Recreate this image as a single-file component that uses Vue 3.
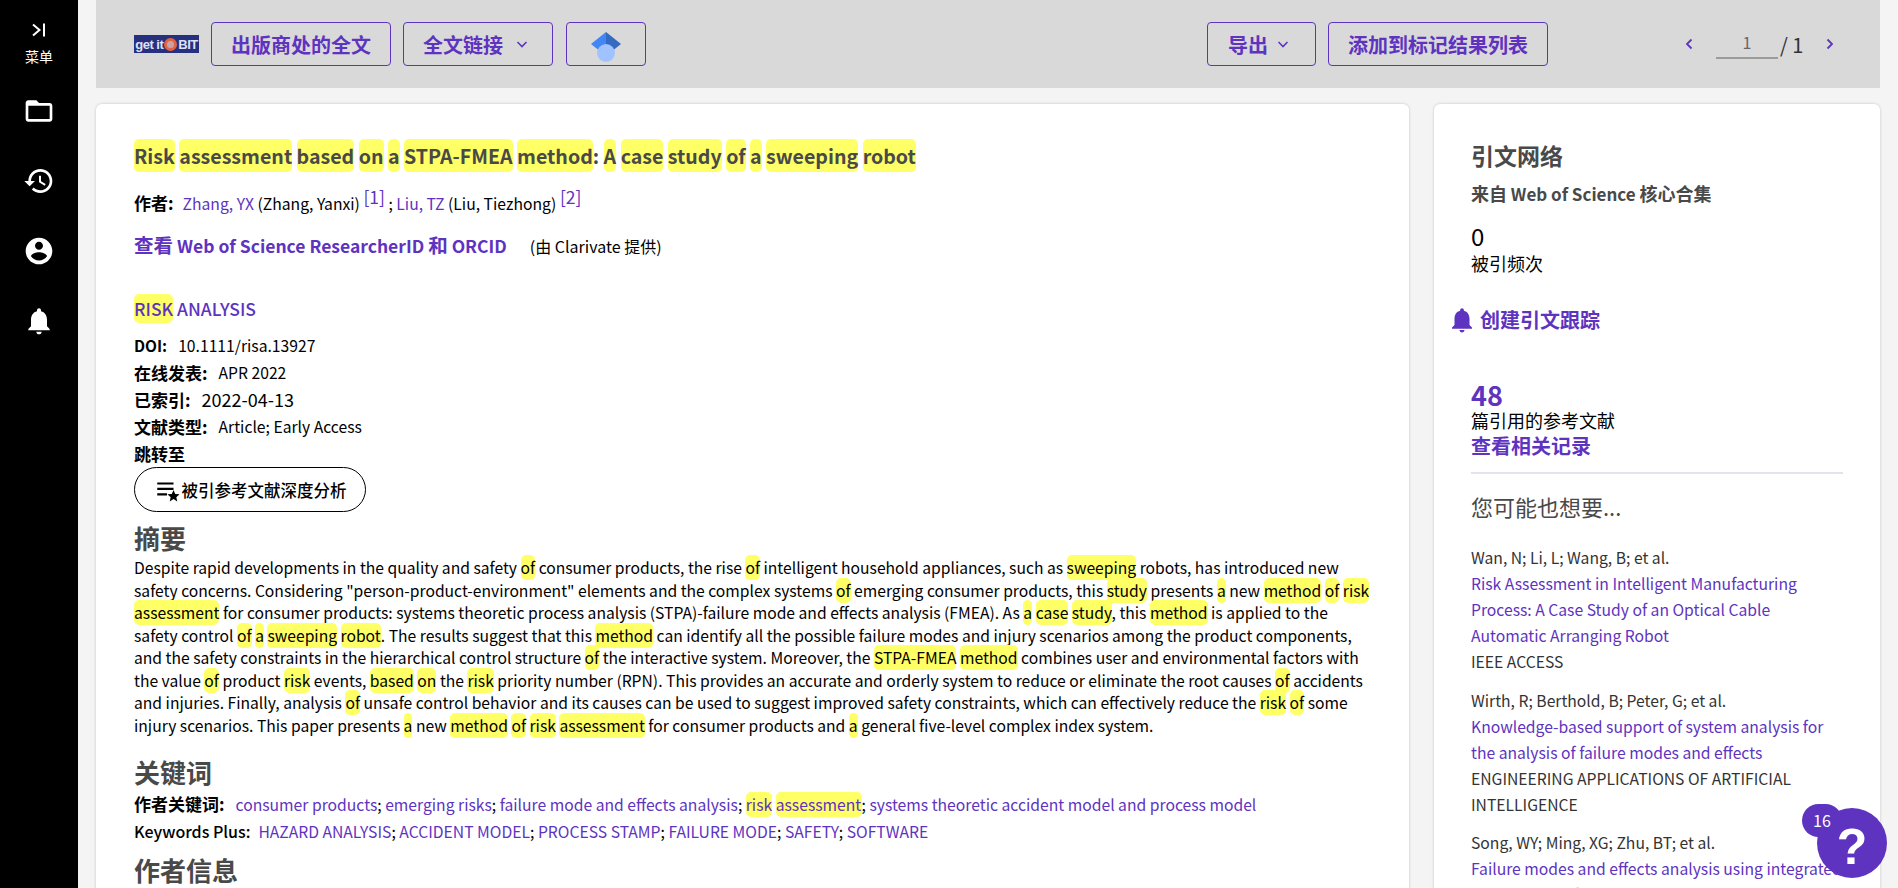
<script setup>
const navIcons = [
  'M20 6h-8l-2-2H4c-1.1 0-1.99.9-1.99 2L2 18c0 1.1.9 2 2 2h16c1.1 0 2-.9 2-2V8c0-1.1-.9-2-2-2zm0 12H4V8h16v10z',
  'M13 3c-4.97 0-9 4.03-9 9H1l3.89 3.89.07.14L9 12H6c0-3.87 3.13-7 7-7s7 3.13 7 7-3.13 7-7 7c-1.93 0-3.68-.79-4.94-2.06l-1.42 1.42C8.27 19.99 10.51 21 13 21c4.97 0 9-4.03 9-9s-4.03-9-9-9zm-1 5v5l4.28 2.54.72-1.21-3.5-2.08V8H12z',
  'M12 2C6.48 2 2 6.48 2 12s4.48 10 10 10 10-4.48 10-10S17.52 2 12 2zm0 3c1.66 0 3 1.34 3 3s-1.34 3-3 3-3-1.34-3-3 1.34-3 3-3zm0 14.2c-2.5 0-4.71-1.28-6-3.22.03-1.99 4-3.08 6-3.08 1.99 0 5.97 1.09 6 3.08-1.29 1.94-3.5 3.22-6 3.22z',
  'M12 22c1.1 0 2-.9 2-2h-4c0 1.1.89 2 2 2zm6-6v-5c0-3.07-1.64-5.64-4.5-6.32V4c0-.83-.67-1.5-1.5-1.5s-1.5.67-1.5 1.5v.68C7.63 5.36 6 7.92 6 11v5l-2 2v1h16v-1l-2-2z'
]
const bell = navIcons[3]

// * marks a highlighted word
const abstract = 'Despite rapid developments in the quality and safety *of consumer products, the rise *of intelligent household appliances, such as *sweeping robots, has introduced new safety concerns. Considering "person-product-environment" elements and the complex systems *of emerging consumer products, this *study presents *a new *method *of *risk *assessment for consumer products: systems theoretic process analysis (STPA)-failure mode and effects analysis (FMEA). As *a *case *study, this *method is applied to the safety control *of *a *sweeping *robot. The results suggest that this *method can identify all the possible failure modes and injury scenarios among the product components, and the safety constraints in the hierarchical control structure *of the interactive system. Moreover, the *STPA-FMEA *method combines user and environmental factors with the value *of product *risk events, *based *on the *risk priority number (RPN). This provides an accurate and orderly system to reduce or eliminate the root causes *of accidents and injuries. Finally, analysis *of unsafe control behavior and its causes can be used to suggest improved safety constraints, which can effectively reduce the *risk *of some injury scenarios. This paper presents *a new *method *of *risk *assessment for consumer products and *a general five-level complex index system.'

function splitMarks(text) {
  return text.split(' ').map(w => {
    if (!w.startsWith('*')) return { text: w, hit: false, tail: '' }
    const m = w.slice(1).match(/^([\w-]+)(.*)$/)
    return { text: m[1], hit: true, tail: m[2] }
  })
}
const abstractWords = splitMarks(abstract)
const titleWords = splitMarks('*Risk *assessment *based *on *a *STPA-FMEA *method: *A *case *study *of *a *sweeping *robot')

const plusKeywords = ['HAZARD ANALYSIS', 'ACCIDENT MODEL', 'PROCESS STAMP', 'FAILURE MODE', 'SAFETY', 'SOFTWARE']

const related = [
  {
    authors: 'Wan, N; Li, L; Wang, B; et al.',
    title: 'Risk Assessment in Intelligent Manufacturing Process: A Case Study of an Optical Cable Automatic Arranging Robot',
    source: 'IEEE ACCESS'
  },
  {
    authors: 'Wirth, R; Berthold, B; Peter, G; et al.',
    title: 'Knowledge-based support of system analysis for the analysis of failure modes and effects',
    source: 'ENGINEERING APPLICATIONS OF ARTIFICIAL INTELLIGENCE'
  },
  {
    authors: 'Song, WY; Ming, XG; Zhu, BT; et al.',
    title: 'Failure modes and effects analysis using integrated weight-based fuzzy TOPSIS',
    source: 'INTERNATIONAL JOURNAL OF COMPUTER INTEGRATED MANUFACTURING'
  }
]
</script>

<template>
  <div class="page">
    <nav class="sidebar">
      <div class="menu">
        <svg class="menuIcon" viewBox="0 0 20 20" width="20" height="20">
          <path d="M4 4.5 10.5 10 4 15.5M15 3.5v13" fill="none" stroke="#fff" stroke-width="2" />
        </svg>
        <span>菜单</span>
      </div>
      <div class="navItem" v-for="d in navIcons" :key="d">
        <svg viewBox="0 0 24 24" width="32" height="32"><path :d="d" fill="#fff" /></svg>
      </div>
    </nav>

    <div class="content">
      <header class="topbar">
        <div class="logo"><span>get it</span><i class="swirl"></i><span>BIT</span></div>
        <button class="btn wide">出版商处的全文</button>
        <button class="btn links">全文链接
          <svg class="chev" viewBox="0 0 14 14" width="14" height="14"><path d="M2.5 5 7 9.5 11.500 5" fill="none" stroke="#5e33bf" stroke-width="1.6" /></svg>
        </button>
        <button class="btn scholar">
          <svg viewBox="0 0 30 30" width="30" height="30">
            <path d="M15 0 0 12l15 12z" fill="#4285f4" />
            <path d="M15 0 30 12 15 24z" fill="#356ac3" />
            <circle cx="15" cy="21" r="9" fill="#a0c3ff" />
          </svg>
        </button>
        <div class="spacer"></div>
        <button class="btn export">导出
          <svg class="chev" viewBox="0 0 14 14" width="14" height="14"><path d="M2.5 5 7 9.5 11.500 5" fill="none" stroke="#5e33bf" stroke-width="1.6" /></svg>
        </button>
        <button class="btn mark">添加到标记结果列表</button>
        <div class="pager">
          <svg viewBox="0 0 14 14" width="14" height="14"><path d="M9.500 2.500 5 7l4.500 4.500" fill="none" stroke="#5e33bf" stroke-width="1.8" /></svg>
          <span class="pageInput">1</span>
          <span class="pageTotal">/ 1</span>
          <svg viewBox="0 0 14 14" width="14" height="14"><path d="M4.500 2.500 9 7l-4.500 4.500" fill="none" stroke="#5e33bf" stroke-width="1.8" /></svg>
        </div>
      </header>

      <div class="columns">
        <main class="card record">
          <h1 class="title">
            <template v-for="(w, i) in titleWords" :key="i"><mark>{{ w.text }}</mark>{{ w.tail }}{{ ' ' }}</template>
          </h1>
          <div class="authors">
            <b>作者:</b>
            <a>Zhang, YX</a> (Zhang, Yanxi) <sup><a>[1]</a></sup> ; <a>Liu, TZ</a> (Liu, Tiezhong) <sup><a>[2]</a></sup>
          </div>
          <div class="orcid">
            <a class="strong"><span class="han">查看</span> Web of Science ResearcherID <span class="han">和</span> ORCID</a>
            <span class="provider">(由 Clarivate 提供)</span>
          </div>
          <div class="journal"><a class="strong"><mark>RISK</mark> ANALYSIS</a></div>
          <div class="meta first"><b>DOI:</b><span>10.1111/risa.13927</span></div>
          <div class="meta"><b>在线发表:</b><span>APR 2022</span></div>
          <div class="meta indexed"><b>已索引:</b><span>2022-04-13</span></div>
          <div class="meta"><b>文献类型:</b><span>Article; Early Access</span></div>
          <div class="meta jump"><b>跳转至</b></div>
          <button class="pill">
            <svg viewBox="0 0 24 24" width="26" height="26">
              <path d="M3 5h15v2H3zM3 10h15v2H3zM3 15h9v2H3z" fill="#000" />
              <path d="m18 12 1.6 3.7 4 .3-3 2.6.9 3.9-3.5-2.1-3.5 2.1.9-3.9-3-2.6 4-.3z" fill="#000" />
            </svg>
            被引参考文献深度分析
          </button>

          <h2 class="abstractHead">摘要</h2>
          <p class="abstract">
            <template v-for="(w, i) in abstractWords" :key="i"><mark v-if="w.hit">{{ w.text }}</mark>{{ w.hit ? w.tail : w.text }}{{ ' ' }}</template>
          </p>

          <h2 class="kwHead">关键词</h2>
          <div class="kwLine">
            <b>作者关键词:</b>
            <a>consumer products</a>; <a>emerging risks</a>; <a>failure mode and effects analysis</a>; <a><mark>risk</mark> <mark>assessment</mark></a>; <a>systems theoretic accident model and process model</a>
          </div>
          <div class="kwLine plus">
            <b>Keywords Plus:</b>
            <template v-for="(k, i) in plusKeywords" :key="k"><a>{{ k }}</a><template v-if="i < plusKeywords.length - 1">; </template></template>
          </div>
          <h2 class="authorHead">作者信息</h2>
        </main>

        <aside class="card side">
          <h3 class="sideTitle">引文网络</h3>
          <div class="sideSub"><span class="han">来自</span> Web of Science <span class="han">核心合集</span></div>
          <div class="count">0</div>
          <div class="countLabel">被引频次</div>
          <a class="track">
            <svg viewBox="0 0 24 24" width="30" height="30"><path :d="bell" fill="#5e33bf" /></svg>
            创建引文跟踪
          </a>
          <a class="refCount">48</a>
          <div class="refLabel">篇引用的参考文献</div>
          <a class="relatedLink">查看相关记录</a>
          <hr class="rule" />
          <h4 class="mayWant">您可能也想要...</h4>
          <div class="related" v-for="r in related" :key="r.authors">
            <div>{{ r.authors }}</div>
            <a>{{ r.title }}</a>
            <div>{{ r.source }}</div>
          </div>
        </aside>
      </div>
    </div>

    <div class="help">
      <span class="helpBadge">16</span>
      <span class="helpMark">?</span>
    </div>
  </div>
</template>

<style>
html, body {
  margin: 0;
  overflow: hidden;
  background: #f4f4f4;
}
</style>

<style scoped>
* {
  box-sizing: border-box;
}

.page {
  display: flex;
  height: 888px;
  overflow: hidden;
  font-family: "Noto Sans CJK SC", "Noto Sans", sans-serif;
  color: #000;
  background: #f4f4f4;
}

.sidebar {
  flex: 0 0 78px;
  display: flex;
  flex-direction: column;
  align-items: center;
  background: #000;
  color: #fff;
}

.menu {
  display: flex;
  flex-direction: column;
  align-items: center;
  padding-top: 20px;
  height: 76px;
  font-size: 14px;
  line-height: 20px;
}

.menuIcon {
  margin-bottom: 6px;
}

.navItem {
  display: flex;
  align-items: center;
  justify-content: center;
  height: 70px;
}

.content {
  flex: 1;
  min-width: 0;
  padding: 0 18px;
}

.topbar {
  display: flex;
  align-items: center;
  height: 88px;
  padding: 0 0 0 38px;
  background: #d9d9d9;
}

.logo {
  display: flex;
  align-items: center;
  justify-content: center;
  width: 65px;
  height: 18px;
  margin-right: 12px;
  background: #27307f;
  color: #dfe2f2;
  font-family: "Liberation Sans", sans-serif;
  font-size: 13px;
  font-weight: 700;
  letter-spacing: -0.5px;
  white-space: nowrap;
}

.swirl {
  width: 13px;
  height: 13px;
  margin: 0 1px;
  border-radius: 50%;
  border: 3px solid #e2633f;
  background: #c9a3a8;
}

.btn {
  display: inline-flex;
  align-items: center;
  justify-content: center;
  height: 44px;
  padding: 0;
  border: 1px solid #5e33bf;
  border-radius: 4px;
  background: transparent;
  color: #5e33bf;
  font-family: inherit;
  font-size: 20px;
  font-weight: 700;
}

.wide {
  width: 180px;
}

.links {
  width: 150px;
  margin-left: 12px;
  padding-right: 4px;
}

.links .chev {
  margin-left: 12px;
}

.scholar {
  width: 80px;
  margin-left: 13px;
  padding-top: 5px;
}

.spacer {
  flex: 1;
}

.export {
  width: 109px;
  padding-right: 5px;
}

.export .chev {
  margin-left: 8px;
}

.mark {
  width: 220px;
  margin-left: 12px;
}

.pager {
  display: flex;
  align-items: center;
  margin-left: 134px;
  width: 198px;
  font-size: 18px;
  color: #333;
}

.pageInput {
  width: 62px;
  margin-left: 20px;
  padding-bottom: 3px;
  border-bottom: 2px solid #9b9b9b;
  text-align: center;
  color: #666;
  font-size: 16px;
  line-height: 24px;
}

.pageTotal {
  margin: 0 20px 0 2px;
  font-size: 20px;
}

.columns {
  display: flex;
  gap: 25px;
  margin-top: 16px;
}

.card {
  background: #fff;
  border-radius: 6px 6px 0 0;
  box-shadow: 0 0 3px rgba(0, 0, 0, 0.2);
}

.record {
  flex: 0 0 1313px;
  height: 800px;
  padding: 32px 35px 0 38px;
}

a {
  color: #5e33bf;
}

mark {
  padding: 1px 0;
  background: #ffff66;
  color: inherit;
  border-radius: 5px;
}

.han {
  font-size: 19.500px;
}

.title {
  margin: 0;
  font-size: 19.600px;
  line-height: 40px;
  font-weight: 700;
  color: #494949;
}

.title mark {
  padding: 2px 0;
}

.authors {
  margin-top: 15px;
  font-size: 15.700px;
  line-height: 24px;
}

.authors b {
  margin-right: 9px;
  font-size: 17px;
}

.authors sup {
  font-size: 17.500px;
  line-height: 0;
}

.orcid {
  margin-top: 16px;
  font-size: 16px;
  line-height: 26px;
}

.strong {
  font-size: 17.500px;
  font-weight: 700;
}

.provider {
  margin-left: 23px;
}

.journal {
  margin-top: 36px;
  line-height: 28px;
}

.journal .strong {
  font-weight: 500;
}

.journal mark {
  padding: 2px 0;
}

.meta {
  display: flex;
  gap: 11px;
  font-size: 15.700px;
  line-height: 27px;
}

.first {
  margin-top: 9px;
}

.first b {
  font-size: 15.500px !important;
}

.indexed span {
  font-size: 18px;
}

.indexed b {
  font-size: 18px;
}

.meta b,
.kwLine b {
  font-size: 17px;
}

.pill {
  display: flex;
  align-items: center;
  justify-content: center;
  gap: 2px;
  width: 232px;
  height: 45px;
  border: 1px solid #000;
  border-radius: 23px;
  background: #fff;
  color: #000;
  font-family: inherit;
  font-size: 16.500px;
  font-weight: 500;
}

h2 {
  margin: 0;
  font-size: 26px;
  font-weight: 700;
  color: #494949;
}

.abstractHead {
  margin-top: 6px;
  line-height: 39px;
}

.abstract {
  margin: 0;
  font-size: 15.670px;
  line-height: 22.500px;
}

.kwHead {
  margin-top: 17px;
  line-height: 36px;
}

.kwLine {
  font-size: 15.700px;
  line-height: 27px;
}

.kwLine b {
  margin-right: 11px;
}

.plus b {
  font-size: 16px;
  font-weight: 500;
  margin-right: 8px;
}

.authorHead {
  margin-top: 7px;
  line-height: 36px;
}

.side {
  flex: 0 0 446px;
  height: 800px;
  padding: 32px 37px 0;
  overflow: hidden;
}

.sideTitle {
  margin: -1px 0 0;
  font-size: 23px;
  line-height: 40px;
  font-weight: 700;
  color: #494949;
}

.sideSub {
  margin-top: 3px;
  font-size: 17px;
  font-weight: 700;
  line-height: 30px;
  color: #494949;
}

.sideSub .han {
  font-size: 18px;
}

.count {
  margin-top: 12px;
  font-size: 24px;
  line-height: 29px;
}

.countLabel {
  font-size: 18px;
  line-height: 26px;
}

.track {
  display: flex;
  align-items: center;
  gap: 3px;
  margin: 29px 0 0 -24px;
  font-size: 20px;
  font-weight: 700;
  line-height: 30px;
}

.refCount {
  display: block;
  margin-top: 45px;
  font-size: 27px;
  font-weight: 700;
  line-height: 30px;
}

.refLabel {
  margin-top: -1px;
  font-size: 18px;
  line-height: 23px;
}

.relatedLink {
  display: block;
  font-size: 20px;
  font-weight: 700;
  line-height: 28px;
}

.rule {
  margin: 12px 0 0;
  border: 0;
  border-top: 2px solid #e4e2ea;
}

.mayWant {
  margin: 14px 0 21px;
  font-size: 22px;
  font-weight: 400;
  line-height: 36px;
  color: #494949;
}

.related {
  margin-bottom: 12.500px;
  font-size: 15.700px;
  line-height: 26px;
  color: #333;
}

.related a {
  display: block;
}

.help {
  position: absolute;
  left: 1802px;
  top: 804px;
  width: 85px;
  height: 74px;
}

.helpMark {
  position: absolute;
  right: 0;
  bottom: 0;
  width: 70px;
  height: 70px;
  border-radius: 50%;
  background: #5e33bf;
  color: #fff;
  text-align: center;
  font-family: "Liberation Sans", sans-serif;
  font-size: 50px;
  font-weight: 700;
  line-height: 78px;
}

.helpBadge {
  position: absolute;
  left: 0;
  top: 0;
  z-index: 1;
  width: 40px;
  height: 33px;
  border-radius: 17px;
  background: #5e33bf;
  color: #fff;
  text-align: center;
  font-size: 16px;
  line-height: 33px;
}
</style>
